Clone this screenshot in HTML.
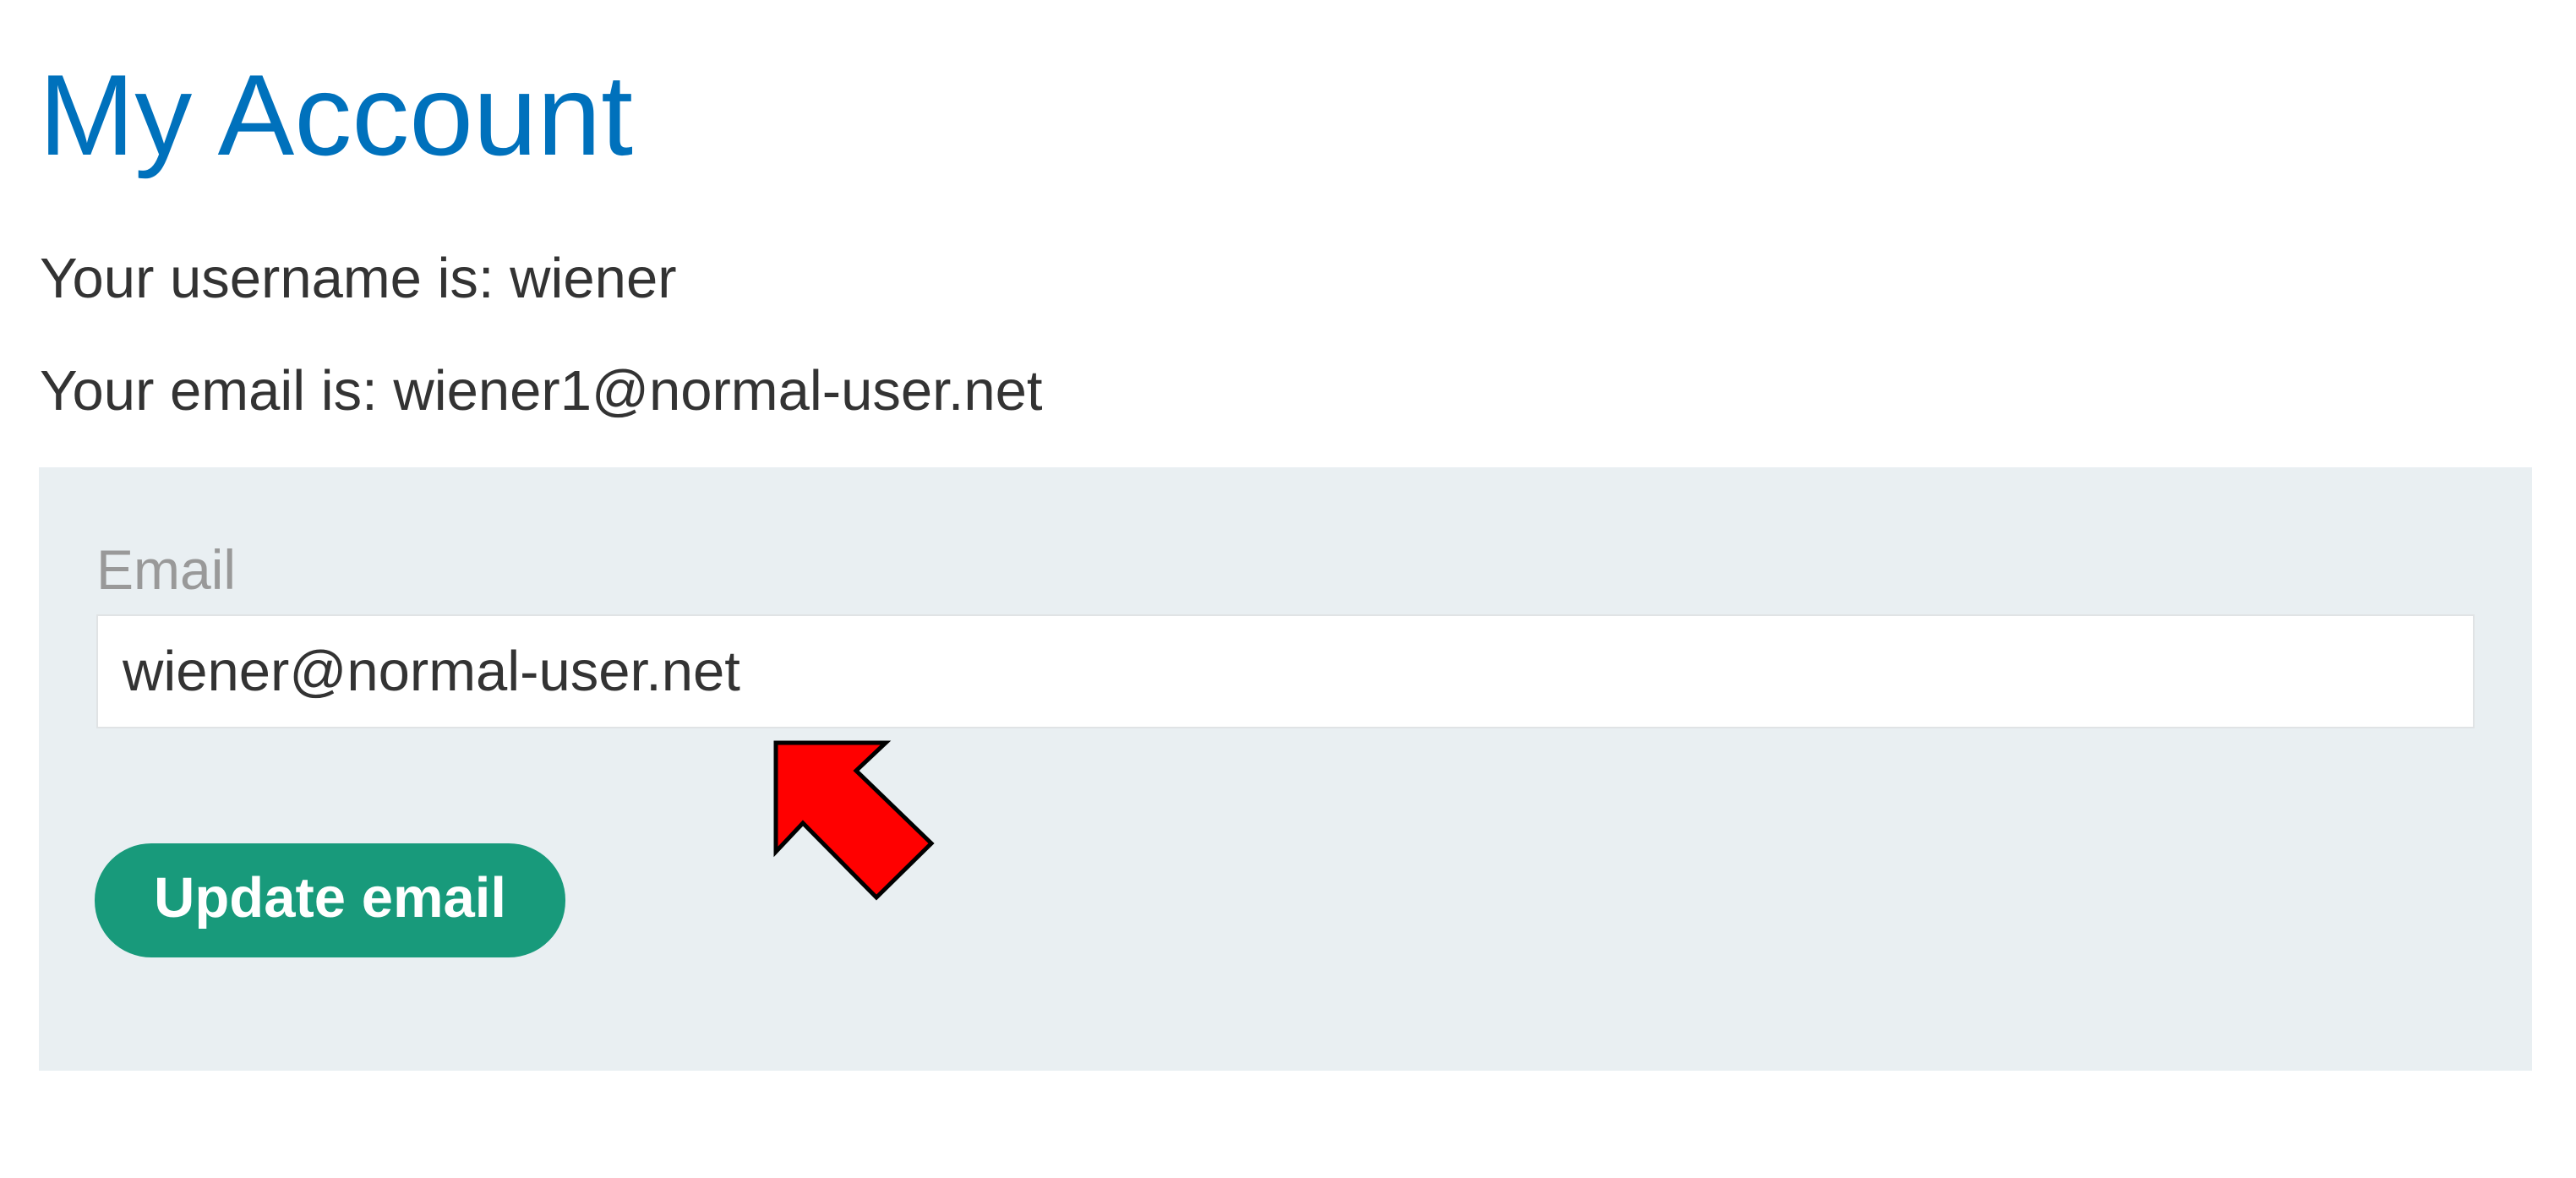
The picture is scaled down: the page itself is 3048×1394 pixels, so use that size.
<!DOCTYPE html>
<html><head><meta charset="utf-8"><style>
html,body{margin:0;padding:0;background:#fff;width:3048px;height:1394px;overflow:hidden;font-family:"Liberation Sans",sans-serif;}
.a{position:absolute;white-space:nowrap;line-height:1;}
</style></head><body>
<div class="a" style="left:46px;top:68px;font-size:136px;color:#0071bc;">My Account</div>
<div class="a" style="left:47px;top:296px;font-size:67px;color:#333;">Your username is: wiener</div>
<div class="a" style="left:47px;top:429px;font-size:67px;color:#333;">Your email is: wiener1@normal-user.net</div>
<div style="position:absolute;left:46px;top:553px;width:2950px;height:714px;background:#e9eff2;"></div>
<div class="a" style="left:114px;top:641px;font-size:66px;color:#999;">Email</div>
<div style="position:absolute;left:114px;top:727px;width:2810px;height:131px;background:#fff;border:2px solid #e0e3e5;"></div>
<div class="a" style="left:145px;top:761px;font-size:67px;color:#333;">wiener@normal-user.net</div>
<div style="position:absolute;left:112px;top:998px;width:557px;height:135px;border-radius:67px;background:#189a7b;"></div>
<div class="a" style="left:182px;top:1029px;font-size:67px;font-weight:bold;color:#fff;">Update email</div>
<svg style="position:absolute;left:0;top:0" width="3048" height="1394">
<polygon points="918,879 1048,879 1013,912 1102,998 1037,1062 950,974 918,1008" fill="#f00" stroke="#000" stroke-width="5"/>
</svg>
</body></html>
